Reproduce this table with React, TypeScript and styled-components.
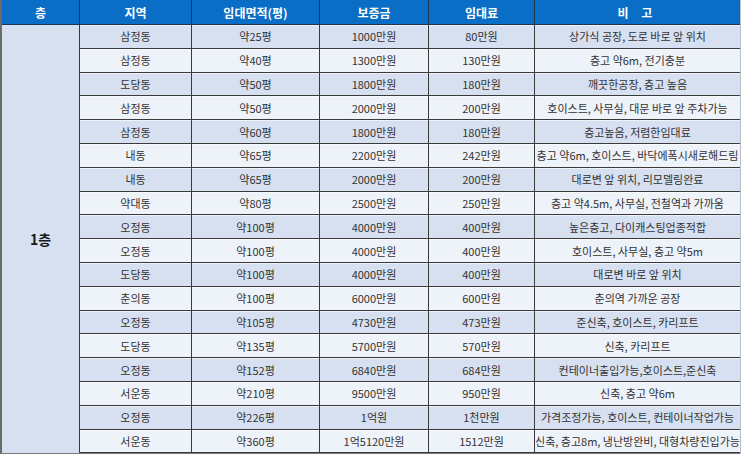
import React from "react";
import styled, { createGlobalStyle } from "styled-components";

const GlobalStyle = createGlobalStyle`
	html, body {
		margin: 0;
		padding: 0;
		background: #ffffff;
	}
	body {
		font-family: "Noto Sans CJK KR", "Noto Sans", sans-serif;
	}
`;

type Row = {
	area: string;
	size: string;
	deposit: string;
	rent: string;
	note: string;
};

const rows: Row[] = [
	{ area: "삼정동", size: "약25평", deposit: "1000만원", rent: "80만원", note: "상가식 공장, 도로 바로 앞 위치" },
	{ area: "삼정동", size: "약40평", deposit: "1300만원", rent: "130만원", note: "층고 약6m, 전기충분" },
	{ area: "도당동", size: "약50평", deposit: "1800만원", rent: "180만원", note: "깨끗한공장, 층고 높음" },
	{ area: "삼정동", size: "약50평", deposit: "2000만원", rent: "200만원", note: "호이스트, 사무실, 대문 바로 앞 주차가능" },
	{ area: "삼정동", size: "약60평", deposit: "1800만원", rent: "180만원", note: "층고높음, 저렴한임대료" },
	{ area: "내동", size: "약65평", deposit: "2200만원", rent: "242만원", note: "층고 약6m, 호이스트, 바닥에폭시새로해드림" },
	{ area: "내동", size: "약65평", deposit: "2000만원", rent: "200만원", note: "대로변 앞 위치, 리모델링완료" },
	{ area: "약대동", size: "약80평", deposit: "2500만원", rent: "250만원", note: "층고 약4.5m, 사무실, 전철역과 가까움" },
	{ area: "오정동", size: "약100평", deposit: "4000만원", rent: "400만원", note: "높은층고, 다이캐스팅업종적합" },
	{ area: "오정동", size: "약100평", deposit: "4000만원", rent: "400만원", note: "호이스트, 사무실, 층고 약5m" },
	{ area: "도당동", size: "약100평", deposit: "4000만원", rent: "400만원", note: "대로변 바로 앞 위치" },
	{ area: "춘의동", size: "약100평", deposit: "6000만원", rent: "600만원", note: "춘의역 가까운 공장" },
	{ area: "오정동", size: "약105평", deposit: "4730만원", rent: "473만원", note: "준신축, 호이스트, 카리프트" },
	{ area: "도당동", size: "약135평", deposit: "5700만원", rent: "570만원", note: "신축, 카리프트" },
	{ area: "오정동", size: "약152평", deposit: "6840만원", rent: "684만원", note: "컨테이너출입가능,호이스트,준신축" },
	{ area: "서운동", size: "약210평", deposit: "9500만원", rent: "950만원", note: "신축, 층고 약6m" },
	{ area: "오정동", size: "약226평", deposit: "1억원", rent: "1천만원", note: "가격조정가능, 호이스트, 컨테이너작업가능" },
	{ area: "서운동", size: "약360평", deposit: "1억5120만원", rent: "1512만원", note: "신축, 층고8m, 냉난방완비, 대형차량진입가능" },
];

const Wrap = styled.div`
	width: 741px;
	border-left: 2px solid #6b6b6b;
	border-bottom: 2px solid #7a7a7a;
	border-right: 1px solid #b9bfc8;
	box-sizing: border-box;
`;

const Table = styled.table`
	width: 100%;
	border-collapse: collapse;
	table-layout: fixed;
	font-size: 11px;
	color: #333333;
`;

const HeadCell = styled.th<{ $w?: number; $spaced?: boolean }>`
	${({ $w }) => ($w ? `width: ${$w}px;` : "")}
	height: 24px;
	padding: 0;
	background: #0b6ec6;
	color: #ffffff;
	font-size: 12px;
	font-weight: 700;
	text-align: center;
	letter-spacing: ${({ $spaced }) => ($spaced ? "5px" : "0")};
	border-left: 1px solid #1e3550;
	border-bottom: 1px solid #1e3550;
	&:first-child {
		border-left: none;
	}
`;

const BodyRow = styled.tr<{ $alt: boolean }>`
	height: 23.8px;
	background: ${({ $alt }) => ($alt ? "#eef2f9" : "#d6e0f0")};
`;

const Cell = styled.td`
	padding: 0;
	text-align: center;
	white-space: nowrap;
	border-left: 1px solid #3a3a3a;
	border-bottom: 1px solid #3a3a3a;
	box-shadow: inset 0 1px 0 rgba(255, 255, 255, 0.6);
`;

const FloorCell = styled.td`
	padding: 0;
	background: #d6e0f0;
	text-align: center;
	font-size: 14px;
	font-weight: 700;
	color: #1a1a1a;
`;

export default function App() {
	return (
		<>
			<GlobalStyle />
			<Wrap>
				<Table>
					<thead>
						<tr>
							<HeadCell $w={77}>층</HeadCell>
							<HeadCell $w={111}>지역</HeadCell>
							<HeadCell $w={127}>임대면적(평)</HeadCell>
							<HeadCell $w={108}>보증금</HeadCell>
							<HeadCell $w={105}>임대료</HeadCell>
							<HeadCell $spaced>비 고</HeadCell>
						</tr>
					</thead>
					<tbody>
						{rows.map((r, i) => (
							<BodyRow key={i} $alt={i % 2 === 1}>
								{i === 0 && <FloorCell rowSpan={rows.length}>1층</FloorCell>}
								<Cell>{r.area}</Cell>
								<Cell>{r.size}</Cell>
								<Cell>{r.deposit}</Cell>
								<Cell>{r.rent}</Cell>
								<Cell>{r.note}</Cell>
							</BodyRow>
						))}
					</tbody>
				</Table>
			</Wrap>
		</>
	);
}
